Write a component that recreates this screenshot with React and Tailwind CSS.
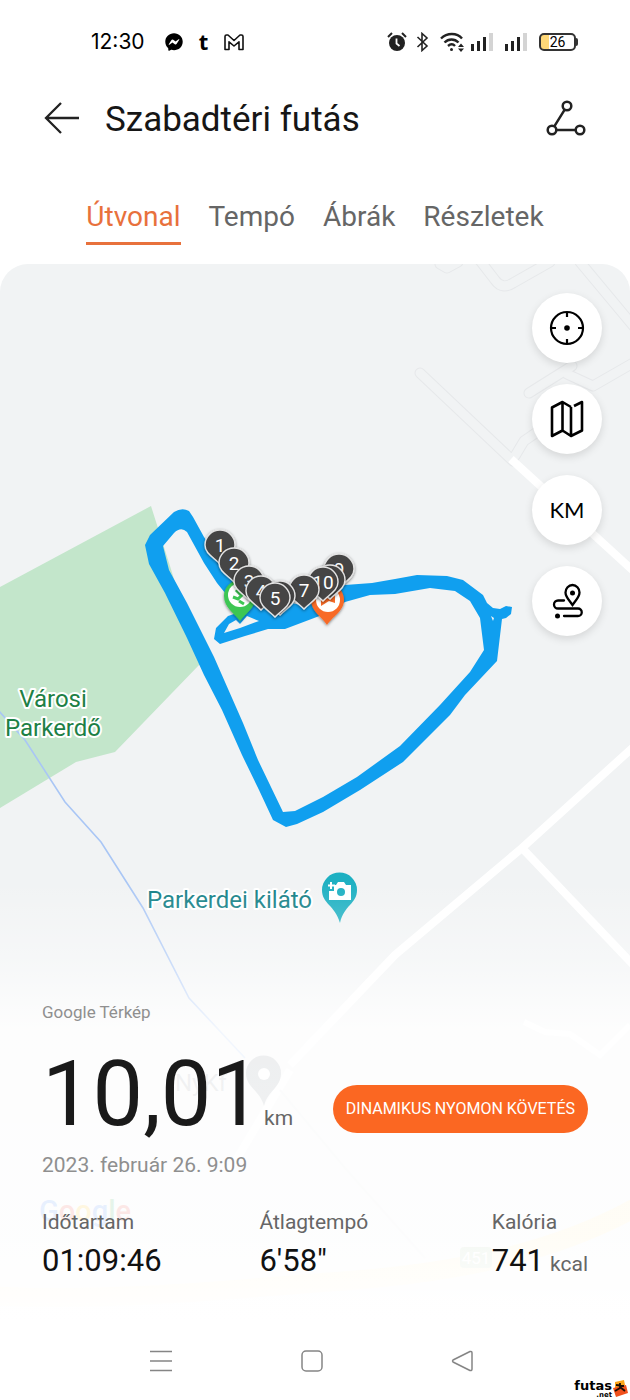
import React, { useState } from "react";
import { FaFacebookMessenger } from "react-icons/fa";

const TABS = ["Útvonal", "Tempó", "Ábrák", "Részletek"];

// drawn back to front
const KM_PINS = [
  { label: "1", x: 220, y: 545 },
  { label: "2", x: 234, y: 563 },
  { label: "9", x: 339, y: 569 },
  { label: "8", x: 330, y: 580 },
  { label: "3", x: 249, y: 581 },
  { label: "10", x: 323, y: 582 },
  { label: "4", x: 261, y: 591 },
  { label: "7", x: 304, y: 590 },
  { label: "6", x: 280, y: 596 },
  { label: "5", x: 275, y: 598 },
];

const STATS = [
  { label: "Időtartam", value: "01:09:46" },
  { label: "Átlagtempó", value: "6'58\"" },
  { label: "Kalória", value: "741", unit: "kcal" },
];

const SIDE_STREETS =
  "M420 373L513 461M478 258L495 280Q502 290 513 283L550 262M580 262L640 334M529 393L572 366M567 374L593 386L640 359M515 456L524 441L540 430M440 264L447 268L458 262";

function Signal() {
  return (
    <svg className="h-[18px] w-[22px]" viewBox="0 0 22 18" fill="#222">
      <rect x="0" y="11" width="3" height="7" />
      <rect x="6" y="8" width="3" height="10" />
      <rect x="12" y="4" width="3" height="14" />
      <rect x="18" y="0" width="4" height="18" fill="#d4d4d4" />
    </svg>
  );
}

function StatusBar() {
  return (
    <div className="flex h-[84px] items-center justify-between pl-[91px] pr-[52px] text-black">
      <div className="flex items-center">
        <span className="w-[74px] font-['Inter'] text-[21px] leading-6">12:30</span>
        <FaFacebookMessenger className="size-[18px]" />
        <span className="w-[41px] pb-[2px] text-center font-['Open_Sans',sans-serif] text-[22px] leading-6 font-bold">
          t
        </span>
        <svg className="h-[17px] w-[20px]" viewBox="0 0 20 17" fill="none" stroke="#111" strokeWidth="1.6" strokeLinejoin="round">
          <path d="M1 15.500V2.500Q1 1 2.500 1H4l6 5.500L16 1h1.500Q19 1 19 2.500v13h-4V7.800L10 12 5 7.800v7.700z" />
        </svg>
      </div>
      <div className="flex items-center">
        <svg className="h-[20px] w-[20px]" viewBox="0 0 20 20">
          <circle cx="10" cy="11" r="8" fill="#222" />
          <path d="M1 5l4-4M19 5l-4-4" stroke="#222" strokeWidth="2" />
          <path d="M9.500 6.500v5l3 2.500" stroke="#fff" strokeWidth="1.800" fill="none" />
        </svg>
        <svg className="ml-[9px] h-[20px] w-[13px]" viewBox="0 0 13 20" fill="none" stroke="#222" strokeWidth="1.600">
          <path d="M1.500 5l9.500 9-5 4.500V1.500L11 6l-9.500 9" />
        </svg>
        <svg className="ml-[11px] h-[20px] w-[26px]" viewBox="0 0 26 20" fill="none" stroke="#222" strokeWidth="2.400">
          <path d="M1 6.500C7 .5 17 .5 22 6.500M4.500 10.500c4-4 10-4 14 0M8 14c2.500-2.300 5-2.300 7 0" />
          <circle cx="11.500" cy="17.500" r="1.500" fill="#222" stroke="none" />
          <path d="M18 15l3-3.500 3 3.500zM18 16.500l3 3.500 3-3.500z" fill="#222" stroke="none" />
        </svg>
        <div className="ml-[5px] flex gap-3">
          <Signal />
          <Signal />
        </div>
        <div className="ml-3 flex items-center">
          <span className="flex h-[18px] w-[37px] items-center justify-center rounded-[5px] border-2 border-[#333] bg-linear-to-r from-[#ffd878] from-25% to-white to-25% text-[14px] leading-none text-black">
            26
          </span>
          <span className="h-[8px] w-[2px] rounded-r-sm bg-[#333]" />
        </div>
      </div>
    </div>
  );
}

function Header() {
  return (
    <header className="flex h-[68px] items-center px-[44px]">
      <button type="button" aria-label="Vissza">
        <svg className="h-[34px] w-[36px]" viewBox="0 0 36 34" fill="none" stroke="#222" strokeWidth="2.300">
          <path d="M17 2L2 17l15 15M2 17h33" />
        </svg>
      </button>
      <h1 className="ml-[25px] flex-1 pt-1 text-[35px] leading-[44px] text-[#161616]">Szabadtéri futás</h1>
      <button type="button" aria-label="Megosztás">
        <svg className="h-[36px] w-[40px]" viewBox="0 0 40 36" fill="none" stroke="#222" strokeWidth="2.500">
          <circle cx="21" cy="6" r="4.300" />
          <circle cx="6" cy="30" r="4.300" />
          <circle cx="34" cy="30" r="4.300" />
          <path d="M18.700 9.700L8.300 26.300M10.300 30h19.400" />
        </svg>
      </button>
    </header>
  );
}

function KmPin({ label, x, y }) {
  return (
    <g transform={`translate(${x} ${y})`}>
      <path
        d="M0 19C-5 13-15 9-15 0A15 15 0 0 1 15 0C15 9 5 13 0 19z"
        fill="#444"
        stroke="#e4e4e4"
        strokeWidth="1.400"
        filter="url(#pinShadow)"
      />
      <text y="7" textAnchor="middle" fontSize="19" fill="#fff">
        {label}
      </text>
    </g>
  );
}

function RouteMap() {
  return (
    <svg
      className="absolute inset-0 h-full w-full font-[Roboto,sans-serif]"
      viewBox="0 264 630 1058"
      preserveAspectRatio="xMidYMin slice"
      role="img"
      aria-label="Útvonal térkép"
    >
      <defs>
        <filter id="pinShadow" x="-30%" y="-30%" width="160%" height="160%">
          <feDropShadow dx="0" dy="1" stdDeviation="1.500" floodOpacity="0.5" />
        </filter>
        <linearGradient id="fade" x1="0" y1="880" x2="0" y2="1322" gradientUnits="userSpaceOnUse">
          <stop offset="0" stopColor="#fff" stopOpacity="0" />
          <stop offset="0.170" stopColor="#fff" stopOpacity="0.350" />
          <stop offset="0.340" stopColor="#fff" stopOpacity="0.850" />
          <stop offset="0.800" stopColor="#fff" stopOpacity="0.880" />
          <stop offset="1" stopColor="#fff" />
        </linearGradient>
      </defs>

      <rect y="264" width="630" height="1058" fill="#f1f3f4" />

      {/* side streets, a wide stroke for the kerb and a narrower one on top */}
      <g fill="none" strokeLinejoin="round" strokeLinecap="round">
        <path d={SIDE_STREETS} stroke="#e6e8ea" strokeWidth="11" />
        <path d={SIDE_STREETS} stroke="#f1f3f4" strokeWidth="9" />
      </g>

      {/* roads */}
      <g fill="none" stroke="#fff">
        <path d="M511 459L640 577" strokeWidth="8" />
        <path d="M640 741L522 848L395 955L290 1065" strokeWidth="8" />
        <path d="M522 848L640 972" strokeWidth="8" />
        <path d="M524 1022L545 1032L570 1034L600 1055L630 1025" strokeWidth="6" />
        <path d="M290 1070L230 1170" strokeWidth="8" />
      </g>
      <path d="M-5 1296C120 1302 240 1288 330 1282S540 1262 640 1205" fill="none" stroke="#fdecb4" strokeWidth="19" />
      <path d="M280 1090L345 1168L425 1258" fill="none" stroke="#e4e7ea" strokeWidth="2" />

      <path d="M0 587L151 506L170 566L200 664L115 752L76 762L0 808z" fill="#c3e6cb" />
      <path d="M-2 710L25 740L65 802L101 842L143 908L189 998L245 1058" fill="none" stroke="#a9c6f5" strokeWidth="1.600" />

      {/* route */}
      <path
        fill="#109fef"
        fillRule="evenodd"
        d="M145 545L150 535L174 512Q182 507 189 511L193 517L204 537L222 562L250 592L300 605L345 585L372 583L395 579L417 575L447 576L463 580L483 595L487 603L493 608L500 609L506 606L512 607L511 614L506 618L502 619L497 661L465 695L450 715L403 762L360 790L323 812L297 824L286 827L273 820L259 790L242 755L222 710L204 675L187 638L165 593L149 564z
        M163 546L174 533Q181 526 187 532L204 563L217 583L234 604L240 612L228 616L216 628L214 639L220 644L245 636L268 629L285 629L330 612L345 602L370 595L395 594L430 588L455 591L470 601L480 618L484 650L470 672L440 705L400 746L357 777L323 797L295 811L283 812L258 760L243 723L214 657L187 603L169 570z
        M224 633L229 624L236 620L240 624L247 616L259 621L240 628z
        M491 616L493 621L494 618z"
      />

      {/* start and finish */}
      <g filter="url(#pinShadow)">
        <path d="M240 621C234 613 224 607 224 596A16 16 0 0 1 256 596C256 607 246 613 240 621z" fill="#3cc653" />
        <circle cx="240" cy="595" r="12" fill="#fff" />
        <path d="M233 597l5 2 5-5M239 601l5 3M236 590l5 5" stroke="#3cc653" strokeWidth="3" fill="none" />
        <path d="M327 625C322 617 311 611 311 600A16.500 16.500 0 0 1 344 600C344 611 332 617 327 625z" fill="#f86b26" />
        <circle cx="328" cy="600" r="12" fill="#fff" />
        <path d="M321 606V595l8 4 6-5v9l-6-2z" fill="#f86b26" />
      </g>

      {KM_PINS.map((pin) => (
        <KmPin key={pin.label} {...pin} />
      ))}

      {/* place names */}
      <g fontSize="24" stroke="#fff" strokeWidth="4" strokeLinejoin="round" style={{ paintOrder: "stroke" }}>
        <g fill="#1d8045" textAnchor="middle">
          <text x="53" y="707">Városi</text>
          <text x="53" y="736">Parkerdő</text>
        </g>
        <text x="147" y="908" fill="#127f86">Parkerdei kilátó</text>
      </g>
      <path d="M340 923C335 905 322 904 322 890A17.500 17.500 0 0 1 357 890C357 904 344 905 340 923z" fill="#1db0c2" />
      <path d="M334 885h2l2-3h6l2 3h5v15h-22v-9h5z" fill="#fff" />
      <circle cx="341" cy="892" r="4" fill="#1db0c2" />
      <path d="M331 882v7M328 885.500h7" stroke="#fff" strokeWidth="2" />

      <text x="175" y="1091" fontSize="24" fill="#9aa0a6">NyKf</text>
      <path d="M264 1106C260 1090 246 1088 246 1073A17.500 17.500 0 0 1 281 1073C281 1088 268 1090 264 1106z" fill="#8b949b" />
      <circle cx="264" cy="1074" r="6" fill="#fff" />
      <text x="39" y="1221" fontSize="29" fontWeight="500">
        <tspan fill="#4285f4">G</tspan>
        <tspan fill="#ea4335">o</tspan>
        <tspan fill="#fbbc05">o</tspan>
        <tspan fill="#4285f4">g</tspan>
        <tspan fill="#34a853">l</tspan>
        <tspan fill="#ea4335">e</tspan>
      </text>
      <rect x="460" y="1247" width="32" height="21" rx="4" fill="#a8c8a0" />
      <text x="476" y="1264" fontSize="17" textAnchor="middle" fill="#fff">451</text>

      <rect y="880" width="630" height="442" fill="url(#fade)" />
    </svg>
  );
}

function MapButton({ label, children }) {
  return (
    <button
      type="button"
      aria-label={label}
      className="flex size-[70px] items-center justify-center rounded-full bg-white text-black shadow-[0_3px_8px_rgba(0,0,0,0.12)]"
    >
      {children}
    </button>
  );
}

function MapControls() {
  return (
    <div className="relative mt-[29px] mr-[28px] flex flex-col gap-[21px] self-end">
      <MapButton label="Pozíció">
        <svg className="size-[36px]" viewBox="0 0 36 36" fill="none" stroke="currentColor" strokeWidth="2.200">
          <circle cx="18" cy="18" r="16" />
          <path d="M18 2v5M18 29v5M2 18h5M29 18h5" />
          <circle cx="18" cy="18" r="2.800" fill="currentColor" stroke="none" />
        </svg>
      </MapButton>
      <MapButton label="Térkép típusa">
        <svg className="h-[38px] w-[34px]" viewBox="0 0 34 38" fill="none" stroke="currentColor" strokeWidth="2.600" strokeLinejoin="round">
          <path d="M21 7L12.500 2 2 7.500V36l10.500-5.500L21 36l11-5.500V2l-8 4M12.500 2v28.500M21 7v29" />
        </svg>
      </MapButton>
      <MapButton label="Kilométerek">
        <span className="font-['Lato',sans-serif] text-[22px] leading-7">KM</span>
      </MapButton>
      <MapButton label="Útvonal">
        <svg className="size-[36px]" viewBox="0 0 36 36" fill="none" stroke="currentColor" strokeWidth="2.300" strokeLinecap="round">
          <path d="M23.500 22C20 17 16.500 14 16.500 9.500a7 7.500 0 0 1 14 0C30.500 14 27 17 23.500 22z" />
          <circle cx="23.500" cy="10" r="2.500" fill="currentColor" stroke="none" />
          <path d="M15 17.500H9a4 4 0 0 0 0 8h20a3.700 3.700 0 0 1 0 7.500H15" />
          <circle cx="8.500" cy="33" r="2.500" fill="currentColor" stroke="none" />
        </svg>
      </MapButton>
    </div>
  );
}

function Summary() {
  return (
    <div className="relative mt-auto px-[42px] pb-[40px]">
      <p className="text-[17px] leading-6 text-[#8f8f8f]">Google Térkép</p>
      <div className="mt-[27px] flex items-start justify-between">
        <p className="flex items-baseline text-[#1a1a1a]">
          <span className="text-[90px] leading-[88px]">10,01</span>
          <span className="ml-[2px] text-[21px] text-[#666]">km</span>
        </p>
        <button
          type="button"
          className="mt-[34px] h-[48px] rounded-full bg-[#fb6722] px-[13px] text-[16px] whitespace-nowrap text-white"
        >
          DINAMIKUS NYOMON KÖVETÉS
        </button>
      </div>
      <p className="mt-3 text-[21px] leading-7 text-[#8f8f8f]">2023. február 26. 9:09</p>
      <dl className="mt-[29px] grid grid-cols-[218fr_233fr_95fr]">
        {STATS.map((stat) => (
          <div key={stat.label} className="whitespace-nowrap">
            <dt className="text-[21px] leading-7 text-[#666]">{stat.label}</dt>
            <dd className="mt-[7px] text-[31px] leading-9 text-[#111]">
              {stat.value}
              {stat.unit && <span className="ml-[6px] text-[21px] text-[#666]">{stat.unit}</span>}
            </dd>
          </div>
        ))}
      </dl>
    </div>
  );
}

function BottomNav() {
  return (
    <nav className="relative flex h-[78px] items-center justify-between pr-[156px] pl-[149px] text-[#858585]">
      <button type="button" aria-label="Legutóbbiak">
        <svg className="size-[24px]" viewBox="0 0 24 24" fill="none" stroke="currentColor" strokeWidth="1.500">
          <path d="M1 2.500h22M1 12h22M1 21.500h22" />
        </svg>
      </button>
      <button type="button" aria-label="Kezdőlap">
        <svg className="size-[24px]" viewBox="0 0 24 24" fill="none" stroke="currentColor" strokeWidth="1.500">
          <rect x="2" y="2" width="20" height="20" rx="4" />
        </svg>
      </button>
      <button type="button" aria-label="Vissza">
        <svg className="size-[24px]" viewBox="0 0 24 24" fill="none" stroke="currentColor" strokeWidth="1.500" strokeLinejoin="round">
          <path d="M3 11Q2 12 3 13L20 21.500Q22 22 22 20V4Q22 2 20 2.500z" />
        </svg>
      </button>
      <div className="absolute right-[2px] bottom-[2px] flex items-start font-['DejaVu_Sans',sans-serif] font-bold text-black">
        <span className="flex flex-col items-end">
          <span className="text-[13px] leading-[12px]">futas</span>
          <span className="text-[7px] leading-[6px]">.net</span>
        </span>
        <svg className="h-[18px] w-[16px]" viewBox="0 0 16 18">
          <path d="M3 2L12 0l1 5-10 4z" fill="#fba51a" />
          <path d="M1 8l13-3 2 8-12 4z" fill="#f0501c" />
          <path d="M8 3v5l-5 3M8 7l5 4M4 5l8 1" stroke="#1a0d05" strokeWidth="1.800" fill="none" />
        </svg>
      </div>
    </nav>
  );
}

export default function App() {
  const [activeTab, setActiveTab] = useState("Útvonal");

  return (
    <div className="flex min-h-screen flex-col bg-white font-[Roboto,sans-serif]">
      <StatusBar />
      <Header />
      <div role="tablist" className="mt-[47px] mb-[19px] flex justify-center gap-[28px]">
        {TABS.map((tab) => (
          <button
            key={tab}
            type="button"
            role="tab"
            aria-selected={tab === activeTab}
            onClick={() => setActiveTab(tab)}
            className={
              tab === activeTab
                ? "border-b-3 border-[#e8713c] pb-[7px] text-[28px] leading-9 text-[#e8713c]"
                : "border-b-3 border-transparent pb-[7px] text-[28px] leading-9 text-[#666]"
            }
          >
            {tab}
          </button>
        ))}
      </div>
      <main className="relative flex flex-1 flex-col overflow-hidden rounded-t-[28px]">
        <RouteMap />
        <MapControls />
        <Summary />
      </main>
      <BottomNav />
    </div>
  );
}
